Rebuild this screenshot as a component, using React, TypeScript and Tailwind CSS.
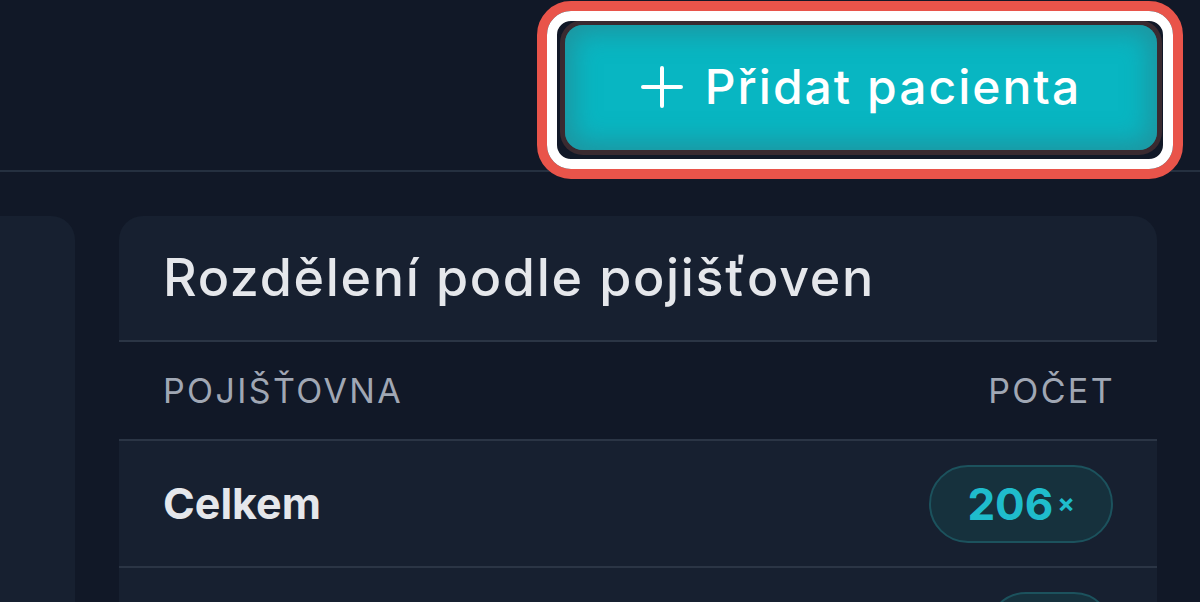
import React from "react";

const rows = [
  { name: "Celkem", count: 206, total: true },
  { name: "VZP", count: 9, total: false },
];

const PlusIcon = () => (
  <svg width="42" height="42" viewBox="0 0 42 42" fill="none" stroke="currentColor" strokeWidth="4" strokeLinecap="round">
    <path d="M21 2v38M2 21h38" />
  </svg>
);

export default function App() {
  return (
    <div className="min-h-screen overflow-hidden bg-[#111827] font-['Inter',sans-serif] text-[#e5e7eb]">
      <header className="flex h-[172px] items-center justify-end border-b-2 border-[#253040] pr-[43px]">
        <div className="relative mt-[4px]">
          <button className="flex h-[125px] w-[592px] items-center justify-center gap-[22px] rounded-[18px] bg-[#08b6c2] text-[48px] font-medium tracking-[0.042em] text-white shadow-[inset_0_0_26px_8px_rgba(45,125,135,0.6),0_0_0_5px_#3a2a30]">
            <PlusIcon />
            Přidat pacienta
          </button>
          {/* highlight annotation */}
          <div className="pointer-events-none absolute -bottom-[29px] -left-[28px] -right-[26px] -top-[24px] rounded-[34px] border-[10px] border-[#e9544a]">
            <div className="absolute inset-0 rounded-[24px] border-[10px] border-white" />
          </div>
        </div>
      </header>

      <main className="flex gap-[44px] pr-[43px] pt-[44px]">
        <div className="-ml-[40px] h-[400px] w-[115px] rounded-t-[24px] bg-[#172030]" />

        <section className="flex-1 overflow-hidden rounded-t-[24px] bg-[#172030]">
          <h2 className="flex h-[126px] items-center border-b-2 border-[#2b3545] px-[44px] text-[52px] font-medium tracking-[0.032em] text-[#e5e7eb]">
            Rozdělení podle pojišťoven
          </h2>
          <div className="flex h-[99px] items-center justify-between border-b-2 border-[#2b3545] bg-[#111827] pl-[44px] pr-[42px] text-[34px] uppercase tracking-[0.07em] text-[#a0a7b4]">
            <span>Pojišťovna</span>
            <span>Počet</span>
          </div>
          {rows.map((r) => (
            <div key={r.name} className="flex h-[127px] items-center justify-between border-b-2 border-[#2b3545] px-[44px]">
              <span className={r.total ? "text-[43px] font-bold" : "text-[43px] font-medium"}>{r.name}</span>
              <span className="flex h-[78px] items-center gap-[4px] rounded-full border-2 border-[#1c525d] bg-[#16313d] px-[36px] font-bold text-[#1fbccc]">
                <span className="text-[44px]">{r.count}</span>
                <span className="text-[26px]">×</span>
              </span>
            </div>
          ))}
        </section>
      </main>
    </div>
  );
}
